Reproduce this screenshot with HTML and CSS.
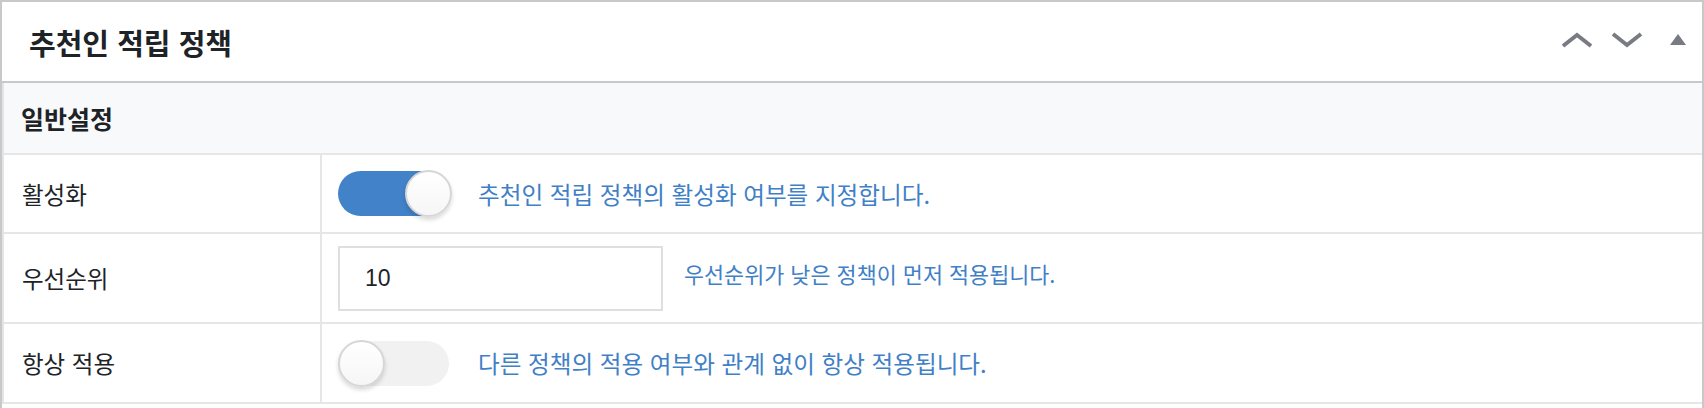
FILE: index.html
```html
<!DOCTYPE html>
<html lang="ko">
<head>
    <meta charset="UTF-8">
    <meta name="viewport" content="width=device-width, initial-scale=1.0">
    <title>추천인 적립 정책</title>
    <link rel="stylesheet" href="styles.css">
</head>
<body>
    <div class="postbox">
        <div class="postbox-header">
            <h2>추천인 적립 정책</h2>
            <div class="handle-actions">
                <button type="button" class="handle-btn" aria-label="위로 이동">
                    <svg width="32" height="16" viewBox="0 0 32 16"><path d="M2 14 L16 3 L30 14" fill="none" stroke="#787c82" stroke-width="4"/></svg>
                </button>
                <button type="button" class="handle-btn" aria-label="아래로 이동">
                    <svg width="32" height="16" viewBox="0 0 32 16"><path d="M2 2 L16 13 L30 2" fill="none" stroke="#787c82" stroke-width="4"/></svg>
                </button>
                <button type="button" class="handle-btn toggle-indicator" aria-label="패널 접기">
                    <svg width="16" height="11" viewBox="0 0 16 11"><polygon points="0,11 8,0 16,11" fill="#787c82"/></svg>
                </button>
            </div>
        </div>

        <div class="settings">
            <div class="section-title">일반설정</div>

            <div class="setting-row">
                <div class="setting-label">활성화</div>
                <div class="setting-value">
                    <label class="switch is-on">
                        <span class="knob"></span>
                    </label>
                    <span class="help">추천인 적립 정책의 활성화 여부를 지정합니다.</span>
                </div>
            </div>

            <div class="setting-row row-tall">
                <div class="setting-label">우선순위</div>
                <div class="setting-value">
                    <input type="text" class="text-input" value="10">
                    <span class="help help-small">우선순위가 낮은 정책이 먼저 적용됩니다.</span>
                </div>
            </div>

            <div class="setting-row">
                <div class="setting-label">항상 적용</div>
                <div class="setting-value">
                    <label class="switch">
                        <span class="knob"></span>
                    </label>
                    <span class="help">다른 정책의 적용 여부와 관계 없이 항상 적용됩니다.</span>
                </div>
            </div>
        </div>
    </div>
</body>
</html>
```

FILE: styles.css
```css
/* General Styles */
body {
    margin: 0;
    background: #ffffff;
    font-family: "Noto Sans CJK KR", "Liberation Sans", sans-serif;
    color: #23282d;
}

.postbox {
    border: 2px solid #c8c8cb;
    border-bottom: none;
    min-height: 406px;
    background: #ffffff;
}

/* Header */
.postbox-header {
    display: flex;
    align-items: center;
    justify-content: space-between;
    height: 79px;
    padding: 0 16px 0 27px;
    border-bottom: 2px solid #c8c8cb;
}

.postbox-header h2 {
    margin: 0;
    font-size: 29px;
    font-weight: 700;
    color: #1d2327;
}

.handle-actions {
    display: flex;
    align-items: center;
    margin-top: -4px;
}

.handle-btn {
    display: flex;
    align-items: center;
    padding: 0;
    margin-left: 18px;
    border: none;
    background: none;
    cursor: pointer;
}

.handle-btn.toggle-indicator {
    margin-left: 27px;
}

/* Settings table */
.settings {
    border-left: 2px solid #e4e4e4;
}

.section-title {
    height: 70px;
    display: flex;
    align-items: center;
    padding-left: 17px;
    background: #f8f9fa;
    border-bottom: 2px solid #e6e6e6;
    font-size: 25px;
    font-weight: 700;
    color: #1d2327;
}

.setting-row {
    display: grid;
    grid-template-columns: 318px 1fr;
    height: 77px;
    border-bottom: 2px solid #e6e6e6;
}

.setting-row.row-tall {
    height: 88px;
}

.setting-row:last-child {
    height: 78px;
}

.setting-label {
    display: flex;
    align-items: center;
    padding-left: 18px;
    border-right: 2px solid #e6e6e6;
    font-size: 23.5px;
    color: #1d2327;
}

.setting-value {
    display: flex;
    align-items: center;
    padding-left: 16px;
}

/* Toggle switch */
.switch {
    position: relative;
    display: block;
    width: 111px;
    height: 45px;
    border-radius: 23px;
    background: #f1f1f1;
    flex-shrink: 0;
}

.switch.is-on {
    background: #4282c8;
}

.switch .knob {
    position: absolute;
    top: -1px;
    left: 0;
    width: 43px;
    height: 43px;
    border-radius: 50%;
    border: 2px solid #d6d6d6;
    background: linear-gradient(#ffffff, #f6f6f6);
    box-shadow: 0 3px 4px rgba(0, 0, 0, 0.15);
}

.switch.is-on .knob {
    left: auto;
    right: -3px;
}

.help {
    margin-left: 29px;
    font-size: 23.6px;
    color: #3f80c6;
}

.help-small {
    margin-left: 21px;
    margin-bottom: 10px;
    font-size: 21.8px;
}

/* Input */
.text-input {
    width: 325px;
    height: 65px;
    box-sizing: border-box;
    padding: 0 25px;
    border: 2px solid #dfdfdf;
    background: #ffffff;
    font-family: "Liberation Sans", sans-serif;
    font-size: 23px;
    color: #1d2327;
    outline: none;
}
```
